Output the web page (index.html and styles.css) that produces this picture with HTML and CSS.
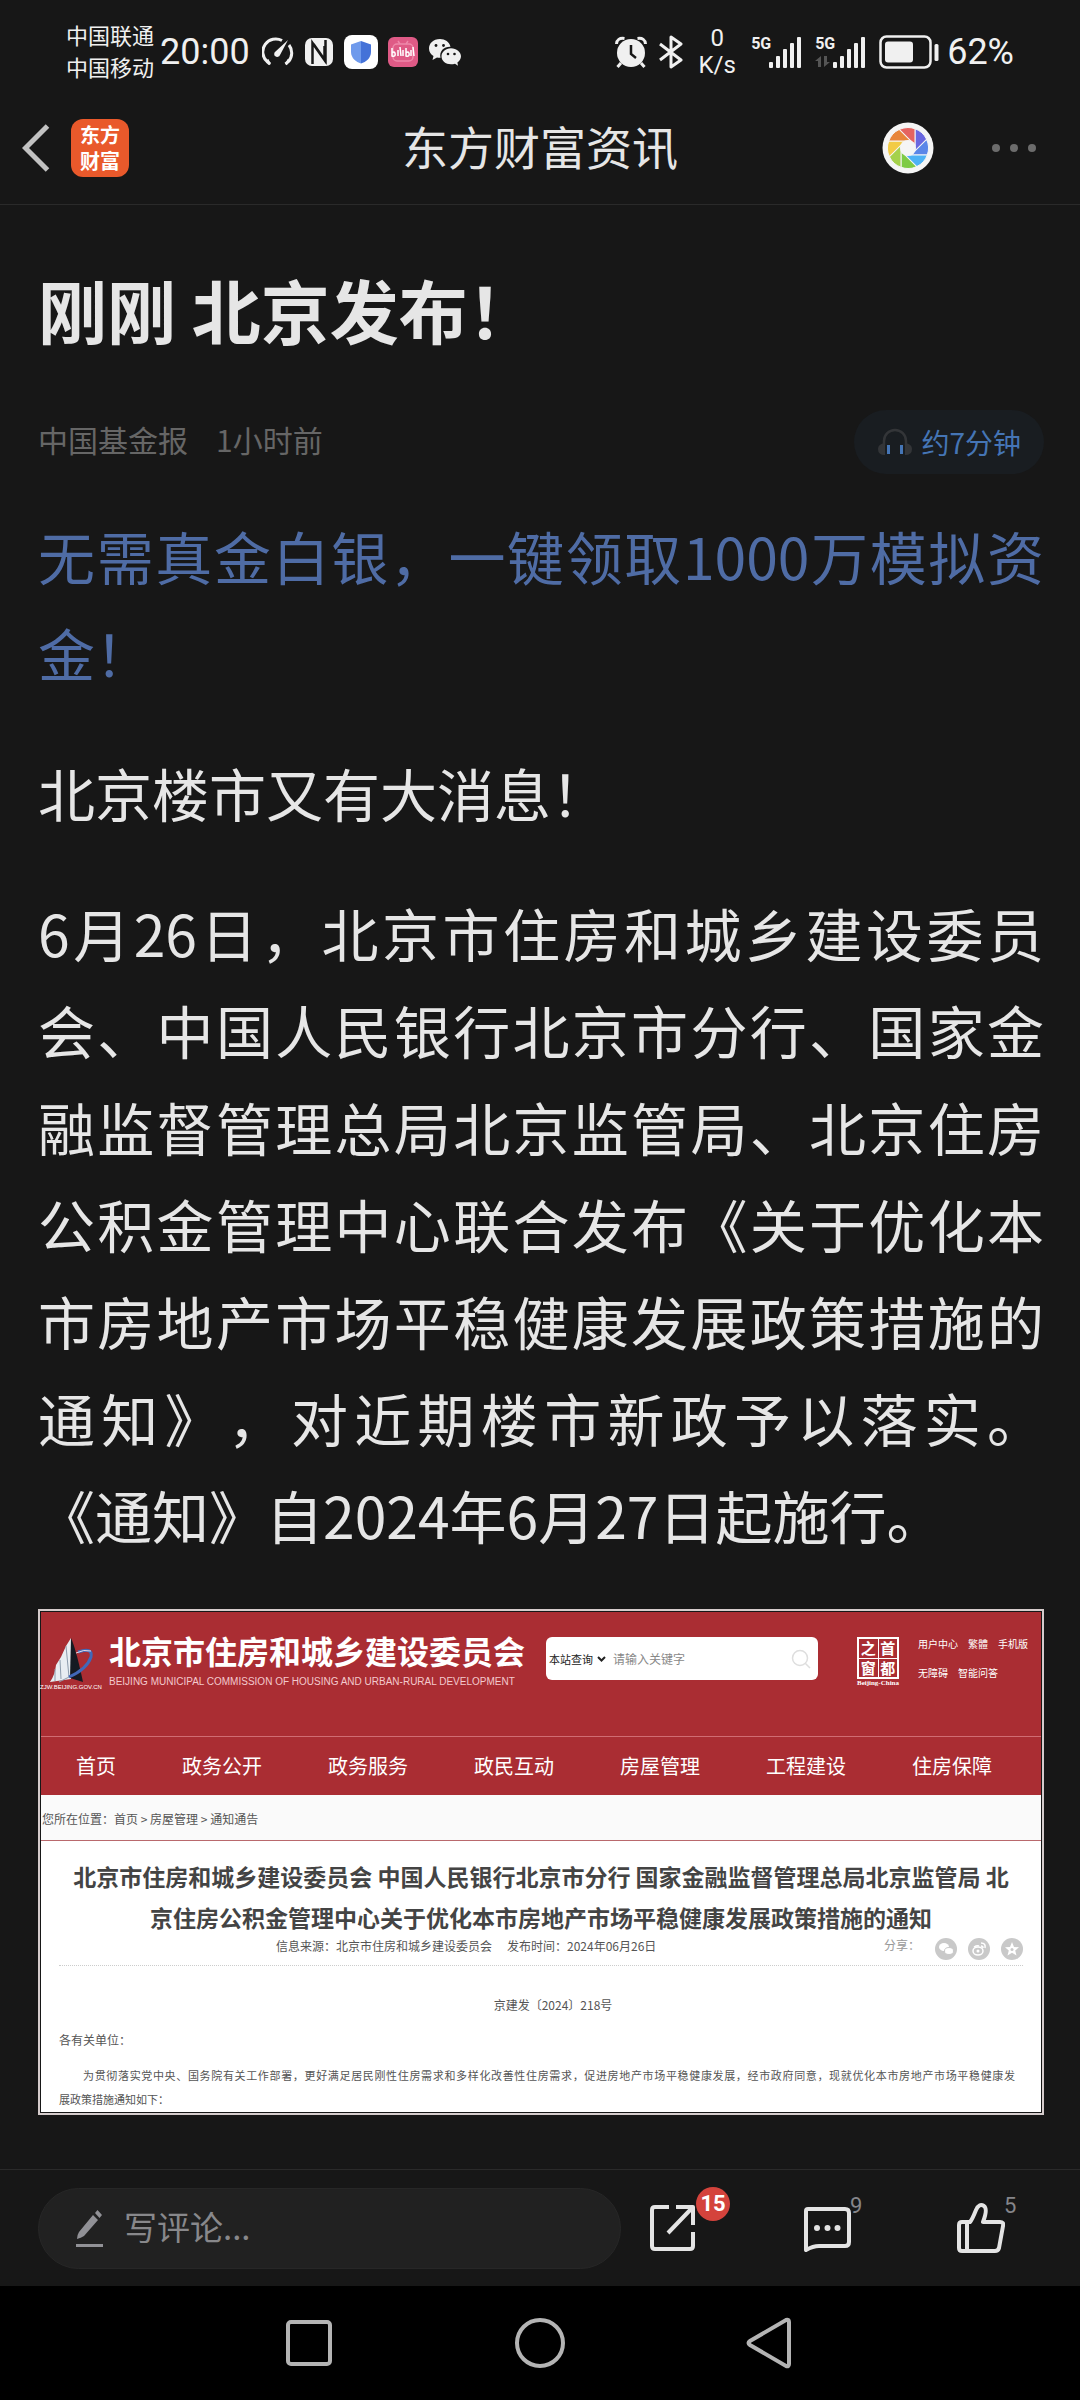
FILE: index.html
```html
<!DOCTYPE html>
<html lang="zh-CN">
<head>
<meta charset="utf-8">
<meta name="viewport" content="width=device-width, initial-scale=1">
<title>东方财富资讯</title>
<link rel="stylesheet" href="styles.css">
</head>
<body>
<div class="status">
  <div class="status-side">
    <div class="carriers"><span>中国联通</span><span>中国移动</span></div>
    <time class="clock">20:00</time>
    <div class="status-icons">
      <svg width="32" height="30" viewBox="0 0 32 30" fill="none" stroke="#f0f0f0" stroke-width="3"><path d="M20 3.500A13 13 0 0 0 5 24.500L8 27M27 8A13 13 0 0 1 26.500 24.500L23.500 27"/><path d="M5.500 22.500L8 27.500M26.500 22.500L24 27.500" stroke-width="2"/><path d="M26 3L18 18A3 3 0 1 1 13.500 14.500Z" fill="#f0f0f0" stroke="none"/></svg>
      <svg width="30" height="30" viewBox="0 0 30 30"><rect x="1" y="1" width="28" height="28" rx="7" fill="#f0f0f0"/><path d="M8.500 27V6L20.500 23V9M9.500 7L21.500 24V3" fill="none" stroke="#171717" stroke-width="2.500"/></svg>
      <svg width="34" height="34" viewBox="0 0 34 34"><rect width="34" height="34" rx="8" fill="#fff"/><path d="M17 6L7 9.500V17C7 23 12 27 17 28.500Z" fill="#6f9aec"/><path d="M17 6L27 9.500V17C27 23 22 27 17 28.500Z" fill="#4472d8"/></svg>
      <svg width="30" height="30" viewBox="0 0 30 30"><rect width="30" height="30" rx="6" fill="#df5a86"/><g fill="none" stroke="#ee88aa" stroke-width="1.500"><rect x="5" y="7" width="20" height="17" rx="4"/><path d="M10 4L12 7M20 4L18 7"/></g><path d="M4 11V19Q8 20 7 16Q6 14 4 16M10 13V19M12 10L13 19M15 13V19M18 11V19Q22 20 21 16Q20 14 18 16M23 13V19M25 10L26 19" fill="none" stroke="#fff" stroke-width="1.500"/></svg>
      <svg width="34" height="30" viewBox="0 0 34 30" fill="#f0f0f0"><path d="M12 2C5 2 1 6.500 1 11.500C1 15 3 17.500 5.500 19L4.500 23L9 20.500Q11 21 12.500 20.700C11 14 16 9.500 22.500 9.700C21.500 5 17 2 12 2Z"/><path d="M23 11.200C17.500 11.200 13.500 15 13.500 19.300C13.500 24 17.500 27.300 23 27.300Q25 27.300 27 26.700L30 28.700L29.400 25.500C31.500 24 33 21.800 33 19.300C33 15 28.500 11.200 23 11.200Z"/><g fill="#171717"><circle cx="8" cy="8.500" r="1.400"/><circle cx="15.500" cy="8.500" r="1.400"/><circle cx="20" cy="17" r="1.300"/><circle cx="26.500" cy="17" r="1.300"/></g></svg>
    </div>
  </div>
  <div class="status-side">
    <svg class="alarm" width="32" height="32" viewBox="0 0 32 32"><circle cx="16" cy="17" r="14" fill="#f0f0f0"/><path d="M1.500 8Q2 1.500 9.500 2.500M30.500 8Q30 1.500 22.500 2.500" fill="none" stroke="#f0f0f0" stroke-width="3"/><path d="M6 27L2.500 31M26 27L29.500 31" stroke="#f0f0f0" stroke-width="3"/><path d="M16 9V18L21 22" fill="none" stroke="#171717" stroke-width="2.500"/></svg>
    <svg width="24" height="34" viewBox="0 0 24 34" fill="none" stroke="#f0f0f0" stroke-width="3"><path d="M1 9L22 25L12 32V2L22 9L1 25" stroke-linejoin="round"/></svg>
    <div class="speed"><span>0</span><span>K/s</span></div>
    <div class="signal"><div class="net"><span>5G</span></div>
      <svg width="34" height="34" viewBox="0 0 34 34" fill="#f0f0f0"><rect y="27" width="4" height="6" rx="1"/><rect x="7" y="21" width="4" height="12" rx="1"/><rect x="14" y="14" width="4" height="19" rx="1"/><rect x="21" y="8" width="4" height="25" rx="1"/><rect x="28" y="2" width="4" height="31" rx="1"/></svg></div>
    <div class="signal"><div class="net"><span>5G</span><svg width="15" height="12" viewBox="0 0 15 12"><path d="M0 5L6 0V11H3V5ZM9 0V11L15 6H12V0Z" fill="#555"/></svg></div>
      <svg width="34" height="34" viewBox="0 0 34 34" fill="#f0f0f0"><rect y="27" width="4" height="6" rx="1"/><rect x="7" y="21" width="4" height="12" rx="1"/><rect x="14" y="14" width="4" height="19" rx="1"/><rect x="21" y="8" width="4" height="25" rx="1"/><rect x="28" y="2" width="4" height="31" rx="1"/></svg></div>
    <svg class="battery" width="60" height="34" viewBox="0 0 60 34"><rect x="1.500" y="1.500" width="50" height="31" rx="6" fill="none" stroke="#f0f0f0" stroke-width="2.500"/><rect x="6" y="6.500" width="28" height="21" rx="3" fill="#f0f0f0"/><rect x="55.500" y="9" width="4" height="17" rx="1.500" fill="#f0f0f0"/></svg>
    <span class="percent">62%</span>
  </div>
</div>

<header class="topbar">
  <div class="topbar-side">
    <button class="icon-btn" aria-label="返回"><svg width="28" height="48" viewBox="0 0 28 48" fill="none" stroke="#c2c2c2" stroke-width="5"><path d="M25.500 2L3.500 24L25.500 46"/></svg></button>
    <a class="app" href="#"><span>东方</span><span>财富</span></a>
  </div>
  <h2 class="topbar-title">东方财富资讯</h2>
  <div class="topbar-side end">
    <button class="icon-btn" aria-label="相册">
      <svg width="52" height="52" viewBox="-26 -26 52 52"><defs><path id="blade" d="M7-19.300A20.500 20.500 0 0 1 18.600-8.700L7 2.900Z" stroke="#f5f5f5"/></defs><circle r="25.500" fill="#f5f5f5"/><use href="#blade" fill="#6a67e0"/><use href="#blade" fill="#5a86e8" transform="rotate(45)"/><use href="#blade" fill="#4db2f5" transform="rotate(90)"/><use href="#blade" fill="#7ecb45" transform="rotate(135)"/><use href="#blade" fill="#a5d14b" transform="rotate(180)"/><use href="#blade" fill="#f2cb45" transform="rotate(225)"/><use href="#blade" fill="#e8853a" transform="rotate(270)"/><use href="#blade" fill="#e5635f" transform="rotate(315)"/><circle r="8" fill="#f5f5f5"/></svg>
    </button>
    <button class="icon-btn" aria-label="更多"><svg width="44" height="10" viewBox="0 0 44 10" fill="#6c6c6c"><circle cx="4" cy="5" r="4"/><circle cx="22" cy="5" r="4"/><circle cx="40" cy="5" r="4"/></svg></button>
  </div>
</header>

<main class="article">
  <h1>刚刚 北京发布&#65281;</h1>
  <div class="byline">
    <span>中国基金报</span><time>1小时前</time>
    <button class="listen"><svg width="36" height="28" viewBox="0 0 36 28"><path d="M7 17V13A11 11 0 0 1 29 13V17" fill="none" stroke="#333538" stroke-width="2.500"/><path d="M8 15V27Q1 27 1 21Q1 16 8 15ZM28 15V27Q35 27 35 21Q35 16 28 15Z" fill="#333538"/><path d="M11.500 17V26M24.500 17V26" stroke="#4575b5" stroke-width="3"/></svg>约7分钟</button>
  </div>
  <p><a class="promo" href="#">无需真金白银&#65292;一键领取1000万模拟资金&#65281;</a></p>
  <p>北京楼市又有大消息&#65281;</p>
  <p>6月26日&#65292;北京市住房和城乡建设委员会、中国人民银行北京市分行、国家金融监督管理总局北京监管局、北京住房公积金管理中心联合发布《关于优化本市房地产市场平稳健康发展政策措施的通知》&#65292;对近期楼市新政予以落实。《通知》自2024年6月27日起施行。</p>

  <figure class="shot">
    <div class="gov">
      <div class="gov-head">
        <div class="gov-mark">
          <svg width="48" height="46" viewBox="0 0 48 46"><path d="M3 45Q8 38 9 28L14 20L19 9L24 1V42Z" fill="#e8edf2"/><path d="M24 1Q29 12 36 45L23 41Z" fill="#151a22"/><path d="M19 9L22 40L12 45M13 23L14 42M8 32V44" stroke="#8c9bac" fill="none"/><path d="M31 15Q46 10 44 20Q40 32 22 40" fill="none" stroke="#4168b8" stroke-width="3"/><path d="M29 16Q37 12 44 14" fill="none" stroke="#e7dce6"/></svg>
          <span>ZJW.BEIJING.GOV.CN</span>
        </div>
        <div class="gov-name"><strong>北京市住房和城乡建设委员会</strong><span>BEIJING MUNICIPAL COMMISSION OF HOUSING AND URBAN-RURAL DEVELOPMENT</span></div>
        <div class="gov-search">
          <select aria-label="查询范围"><option>本站查询</option></select>
          <svg width="9" height="6" viewBox="0 0 9 6"><path d="M1 1L4.500 4.500L8 1" fill="none" stroke="#222" stroke-width="2"/></svg>
          <input type="text" placeholder="请输入关键字" aria-label="关键字">
          <svg width="20" height="20" viewBox="0 0 20 20" fill="none" stroke="#dedede" stroke-width="1.500"><circle cx="9" cy="9" r="7.500"/><path d="M14.500 14.500L19 19"/></svg>
        </div>
        <div class="seal"><div class="seal-grid"><span>之</span><span>首</span><span>窗</span><span>都</span></div><small>Beijing-China</small></div>
        <div class="gov-links"><div><a href="#">用户中心</a><a href="#">繁體</a><a href="#">手机版</a></div><div><a href="#">无障碍</a><a href="#">智能问答</a></div></div>
      </div>
      <nav class="gov-nav"><a href="#">首页</a><a href="#">政务公开</a><a href="#">政务服务</a><a href="#">政民互动</a><a href="#">房屋管理</a><a href="#">工程建设</a><a href="#">住房保障</a></nav>
      <div class="crumbs">您所在位置&#65306;<a href="#">首页</a> &gt; <a href="#">房屋管理</a> &gt; <a href="#">通知通告</a></div>
      <div class="doc">
        <h3>北京市住房和城乡建设委员会 中国人民银行北京市分行 国家金融监督管理总局北京监管局 北<br>京住房公积金管理中心关于优化本市房地产市场平稳健康发展政策措施的通知</h3>
        <div class="doc-meta">
          <div class="doc-source"><span>信息来源&#65306;北京市住房和城乡建设委员会</span><span>发布时间&#65306;2024年06月26日</span></div>
          <div class="share"><span>分享&#65306;</span>
            <svg width="22" height="22" viewBox="0 0 22 22"><circle cx="11" cy="11" r="11" fill="#c9c9c9"/><ellipse cx="9" cy="9" rx="5" ry="4" fill="#fff"/><ellipse cx="14" cy="13" rx="4.500" ry="3.500" fill="#fff" stroke="#c9c9c9"/></svg>
            <svg width="22" height="22" viewBox="0 0 22 22"><circle cx="11" cy="11" r="11" fill="#c9c9c9"/><ellipse cx="10" cy="13" rx="5" ry="4" fill="none" stroke="#fff" stroke-width="1.500"/><circle cx="10" cy="13" r="1.500" fill="#fff"/><path d="M6 9Q9 7 11 8M13 5Q18 5 17 10M13 8Q15 8 15 10" fill="none" stroke="#fff" stroke-width="1.500"/></svg>
            <svg width="22" height="22" viewBox="0 0 22 22"><circle cx="11" cy="11" r="11" fill="#c9c9c9"/><path d="M11 4L13 9L18 9.300L14.200 12.500L15.500 17.500L11 14.700L6.500 17.500L7.800 12.500L4 9.300L9 9Z" fill="#fff"/><circle cx="11" cy="11.500" r="1.500" fill="#c9c9c9"/></svg>
          </div>
        </div>
        <div class="doc-number">京建发〔2024〕218号</div>
        <div class="doc-to">各有关单位&#65306;</div>
        <div class="doc-text">为贯彻落实党中央、国务院有关工作部署&#65292;更好满足居民刚性住房需求和多样化改善性住房需求&#65292;促进房地产市场平稳健康发展&#65292;经市政府同意&#65292;现就优化本市房地产市场平稳健康发<br><span>展政策措施通知如下&#65306;</span></div>
      </div>
    </div>
  </figure>
</main>

<footer class="actions">
  <label class="comment">
    <svg width="30" height="40" viewBox="0 0 30 40" fill="#919196"><path d="M18 7L23 12L9 28Q6 30 2 31Q2 27 4 24ZM20 5L22.500 2L27 7L24.500 10Z"/><rect x="1" y="36" width="27" height="3"/></svg>
    <input type="text" placeholder="写评论..." aria-label="写评论">
  </label>
  <div class="tools">
    <button class="tool" aria-label="分享"><svg width="48" height="48" viewBox="0 0 48 48" fill="none" stroke="#e4e4e4" stroke-width="4"><path d="M20 3H6Q3 3 3 6V42Q3 45 6 45H41Q44 45 44 42V28"/><path d="M27 3H44V21M44 3L19 29" stroke-linejoin="round"/></svg><span class="badge">15</span></button>
    <button class="tool" aria-label="评论"><svg width="48" height="48" viewBox="0 0 48 48" fill="none" stroke="#e4e4e4" stroke-width="4"><path d="M5 5H42Q46 5 46 9V38Q46 42 42 42H16Q10 42 3 46V7Q3 5 5 5Z" stroke-linejoin="round"/><g fill="#e4e4e4" stroke="none"><circle cx="14" cy="24" r="3"/><circle cx="24.500" cy="24" r="3"/><circle cx="34.500" cy="24" r="3"/></g></svg><span class="count">9</span></button>
    <button class="tool" aria-label="点赞"><svg width="48" height="50" viewBox="0 0 48 50" fill="none" stroke="#e4e4e4" stroke-width="4" stroke-linejoin="round"><path d="M10 19V48M5 19H13Q15 17 19 7Q22 0 27 3Q31 6 26 19H43Q47 19 46 23L42 45Q41 48 38 48H5Q2 48 2 45V22Q2 19 5 19Z"/></svg><span class="count">5</span></button>
  </div>
</footer>

<nav class="sysnav" aria-label="系统导航">
  <button class="icon-btn" aria-label="最近任务"><svg width="52" height="52" viewBox="0 0 52 52" fill="none" stroke="#b4b4b4" stroke-width="4"><rect x="5" y="5" width="42" height="42" rx="3"/></svg></button>
  <button class="icon-btn" aria-label="主屏幕"><svg width="52" height="52" viewBox="0 0 52 52" fill="none" stroke="#b4b4b4" stroke-width="4"><circle cx="26" cy="26" r="23"/></svg></button>
  <button class="icon-btn" aria-label="返回"><svg width="52" height="52" viewBox="0 0 52 52" fill="none" stroke="#b4b4b4" stroke-width="4"><path d="M41 3Q44 2 44 5V47Q44 50 41 49L5 28Q2 26 5 24Z"/></svg></button>
</nav>
</body>
</html>
```

FILE: styles.css
```css
* { box-sizing: border-box; margin: 0; padding: 0; }

body {
  min-height: 100vh;
  display: flex;
  flex-direction: column;
  background: #171717;
  color: #e6e6e6;
  font-family: "Noto Sans CJK SC", sans-serif;
  text-spacing-trim: space-all;
}

svg { display: block; flex: none; }
a { color: inherit; text-decoration: none; }
button, input, select { font: inherit; color: inherit; background: none; border: 0; outline: 0; }
button { cursor: pointer; }

/* status bar */
.status {
  display: flex;
  justify-content: space-between;
  padding: 20px 66px 0;
  height: 84px;
  color: #f0f0f0;
}
.status-side { display: flex; align-items: center; height: 64px; }
.carriers { display: flex; flex-direction: column; padding-bottom: 4px; font-size: 22px; line-height: 32px; }
.clock, .percent { font-family: Roboto, sans-serif; font-size: 36px; line-height: 40px; }
.clock { margin-left: 6px; }
.status-icons { display: flex; align-items: center; gap: 10px; margin-left: 12px; }
.alarm { margin-right: 12px; }
.speed {
  display: flex;
  flex-direction: column;
  align-items: center;
  width: 68px;
  font: 24px/27px Roboto, sans-serif;
}
.signal { display: flex; margin-right: 12px; }
.net {
  display: flex;
  flex-direction: column;
  gap: 3px;
  width: 18px;
  font: bold 16px/18px Roboto, sans-serif;
}
.battery { margin-right: 8px; }

/* title bar */
.topbar {
  display: grid;
  grid-template-columns: 1fr auto 1fr;
  align-items: center;
  height: 121px;
  padding: 7px 22px 0;
  border-bottom: 1px solid #2a2a2a;
}
.topbar-side { display: flex; align-items: center; gap: 21px; }
.topbar-side.end { justify-content: flex-end; gap: 58px; padding-right: 22px; }
.topbar-title { padding-bottom: 5px; font-size: 46px; font-weight: 400; line-height: 60px; }
.app {
  display: flex;
  flex-direction: column;
  align-items: center;
  justify-content: center;
  width: 58px;
  height: 58px;
  border-radius: 12px;
  background: #e9592b;
  color: #fff;
  font-size: 20px;
  font-weight: 700;
  line-height: 26px;
}

/* article */
.article { flex: 1; padding: 59px 36px 54px 38px; }
.article h1 { font-size: 69px; font-weight: 700; line-height: 90px; }
.byline {
  display: flex;
  align-items: flex-start;
  gap: 28px;
  margin: 56px 0 33px;
  font-size: 30px;
  line-height: 58px;
  color: #666;
}
.listen {
  display: flex;
  align-items: center;
  gap: 8px;
  height: 64px;
  margin-left: auto;
  padding: 0 23px;
  border-radius: 32px;
  background: #191d21;
  color: #4575b5;
  font-size: 28px;
}
.article p {
  margin-bottom: 43px;
  font-size: 57px;
  line-height: 97px;
  text-align: justify;
}
.promo { color: #4f6ca5; }

/* web page capture */
.shot { margin-top: 46px; border: 2px solid #d5cccc; padding: 1px; }
.gov { background: #fff; color: #555; font-size: 12px; }
.gov-head {
  display: flex;
  height: 124px;
  padding-top: 25px;
  background: #aa2d33;
  color: #fff;
}
.gov-mark {
  display: flex;
  flex-direction: column;
  align-items: center;
  width: 60px;
  font: 6px/8px "Liberation Sans", sans-serif;
}
.gov-name { display: flex; flex-direction: column; width: 414px; margin-left: 8px; white-space: nowrap; }
.gov-name strong { font-size: 32px; line-height: 26px; }
.gov-name span { margin-top: 13px; font: 10px/12px "Liberation Sans", sans-serif; color: #f3c9cd; }
.gov-search {
  display: flex;
  align-items: center;
  width: 272px;
  height: 43px;
  margin-left: 23px;
  padding: 0 7px 0 3px;
  border-radius: 6px;
  background: #fff;
}
.gov-search select { appearance: none; width: 48px; color: #222; font-size: 11px; }
.gov-search input { flex: 1; min-width: 0; margin-left: 7px; }
.gov-search input::placeholder { color: #888; opacity: 1; }
.seal { display: flex; flex-direction: column; align-items: center; width: 46px; margin-left: 37px; }
.seal-grid {
  display: grid;
  grid-template-columns: 1fr 1fr;
  gap: 1px;
  width: 42px;
  height: 42px;
  border: 2px solid #fff;
  background: #fff;
}
.seal-grid span { background: #aa2d33; font-size: 15px; font-weight: 700; line-height: 18px; text-align: center; }
.seal small { font: bold 7px/9px "Liberation Serif", serif; }
.gov-links { display: flex; flex-direction: column; gap: 15px; margin-left: 17px; font-size: 10px; line-height: 14px; }
.gov-links div { display: flex; gap: 10px; }
.gov-nav {
  display: flex;
  gap: 66px;
  height: 59px;
  padding-left: 35px;
  border-top: 1px solid #d06c72;
  background: #aa2d33;
  color: #fff;
  font-size: 20px;
  line-height: 58px;
  white-space: nowrap;
}
.crumbs {
  height: 46px;
  padding-left: 1px;
  border-bottom: 1px solid #b9696d;
  background: #fafafa;
  line-height: 48px;
}
.doc { padding: 15px 18px 1px; }
.doc h3 { font-size: 23px; line-height: 41px; text-align: center; white-space: nowrap; color: #444; }
.doc-meta {
  display: flex;
  align-items: flex-start;
  height: 28px;
  border-bottom: 1px dotted #ccc;
  line-height: 16px;
}
.doc-source { display: flex; gap: 15px; flex: 1; padding-left: 217px; }
.share { display: flex; align-items: flex-start; gap: 11px; color: #999; line-height: 14px; }
.share span { margin-right: 4px; }
.doc-number { margin-top: 29px; line-height: 20px; text-align: center; text-indent: 24px; }
.doc-to { margin-top: 15px; line-height: 20px; }
.doc-text {
  margin-top: 13px;
  padding-right: 8px;
  font-size: 11px;
  line-height: 24px;
  text-indent: 24px;
  text-align: justify;
  text-align-last: justify;
}
.doc-text span { display: block; text-indent: 0; text-align-last: left; }

/* comment bar */
.actions {
  display: flex;
  align-items: center;
  height: 117px;
  padding: 0 36px 0 38px;
  border-top: 1px solid #2a2a2a;
}
.comment {
  display: flex;
  align-items: center;
  gap: 19px;
  flex: 1;
  height: 81px;
  padding: 0 36px;
  border: 1px solid #272727;
  border-radius: 41px;
  background: #212121;
}
.comment input { flex: 1; min-width: 0; padding-bottom: 4px; font-size: 33px; line-height: 48px; }
.comment input::placeholder { color: #88888b; opacity: 1; }
.tools { display: flex; gap: 106px; padding: 0 39px 0 28px; }
.tool { position: relative; }
.badge {
  position: absolute;
  left: 47px;
  top: -16px;
  width: 34px;
  height: 34px;
  border-radius: 50%;
  background: #d4433c;
  color: #fff;
  font: bold 22px/34px Roboto, sans-serif;
}
.count { position: absolute; left: 47px; top: -10px; font: 22px/26px Roboto, sans-serif; color: #85858a; }

/* system navigation */
.sysnav {
  display: flex;
  align-items: center;
  justify-content: center;
  gap: 179px;
  height: 114px;
  background: #000;
}
```
